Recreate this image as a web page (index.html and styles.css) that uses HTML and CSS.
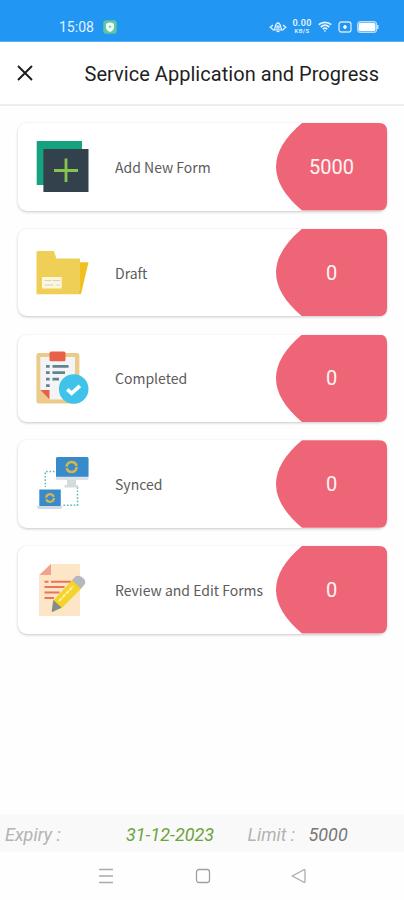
FILE: index.html
```
<!DOCTYPE html>
<html lang="en">
<head>
<meta charset="utf-8">
<title>Service Application and Progress</title>
<link rel="stylesheet" href="styles.css">
</head>
<body>
<header class="status">
  <span class="clock">15:08</span>
  <svg class="shield" width="14" height="14" viewBox="0 0 14 14"><rect x=".3" y=".3" width="13.4" height="13.4" rx="3" fill="#5cc8a0"/><path d="M7 2.3l4 1.4v3.5c0 2.3-1.8 3.8-4 4.7-2.200-.9-4-2.400-4-4.700V3.700z" fill="#f4fffa"/><circle cx="7" cy="6.800" r="1.400" fill="#83d5b5"/></svg>
  <svg class="eye" width="18" height="14" viewBox="0 0 18 14" fill="none" stroke="#e2f2ff" stroke-width="1.300"><path d="M4 5L1.200 7.300 4 9.500M14 5l2.800 2.300L14 9.500M5 9.800c1.500-1 1-6.800 4-6.800s2.500 5.800 4 6.800z"/><circle cx="9" cy="7" r="1.200"/><path d="M7.500 11.500h3"/></svg>
  <span class="speed"><b>0.00</b><b class="unit">KB/S</b></span>
  <svg class="wifi" width="14" height="12" viewBox="0 0 14 12" fill="none" stroke="#e8f5ff" stroke-width="1.700"><path d="M.7 3.700c3.700-3.200 8.900-3.200 12.600 0M2.800 6c2.500-2.200 5.900-2.200 8.400 0M4.800 8.200c1.300-1.200 3.100-1.200 4.400 0"/><path d="M5.700 9.400h2.600L7 11z" fill="#fff" stroke="none"/></svg>
  <svg class="sim" width="14" height="12" viewBox="0 0 14 12"><rect x="1" y="1" width="12" height="10" rx="2.200" fill="none" stroke="#cfe8fd" stroke-width="1.300"/><path d="M7 4v4M5 6h4" stroke="#fff" stroke-width="1.700"/></svg>
  <svg class="battery" width="22" height="12" viewBox="0 0 22 12"><rect x=".6" y=".6" width="19" height="10.800" rx="3" fill="none" stroke="#b9defc" stroke-width="1.100"/><rect x="1.500" y="1.700" width="17" height="8.600" rx="2" fill="#fff"/><path d="M20.800 4v4" stroke="#d9edfd" stroke-width="1.300"/></svg>
</header>
<div class="appbar">
  <svg class="close" width="16" height="16" viewBox="0 0 16 16"><path d="M1 1l14 14M15 1L1 15" stroke="#1c1c1c" stroke-width="1.900"/></svg>
  <h1>Service Application and Progress</h1>
</div>
<main class="cards">
  <section class="card">
    <svg class="icon" viewBox="0 0 54 54"><path fill="#16a17f" d="M.7 1H46v44H.7z"/><path fill="#33414d" d="M7.400 9h45.100v43H7.400z"/><path d="M30 18.500V42M18 30.500h24" stroke="#87c34f" stroke-width="2.800"/></svg>
    <span class="label add">Add New Form</span><span class="count">5000</span>
  </section>
  <section class="card">
    <svg class="icon" viewBox="0 0 54 54"><path fill="#efc11f" d="M40 16.300h12.500L45 48H35z"/><path fill="#efcf56" d="M.5 6q0-1 1-1H17q1 0 1.300 1l2 6.500H43q1 0 1 1V44l-1.500 4.300H.5z"/><path fill="#fbf6df" d="M6 31h19.700v11.500H6z"/><path d="M8.500 34.500h7m1.500 0h7M8.500 39h9m3 0h3" stroke="#d9d3b4" stroke-width="1.200"/></svg>
    <span class="label draft">Draft</span><span class="count">0</span>
  </section>
  <section class="card">
    <svg class="icon" viewBox="0 0 54 54"><rect x=".4" y="2" width="43" height="50.600" rx="2.500" fill="#ebca8a"/><path fill="#f3f4f5" d="M4.300 6H39v42.500H13.500L4.300 39z"/><path fill="#e96048" d="M4.300 39h9.200v9.500z"/><rect x="13.500" y=".5" width="16" height="9.800" rx="1.500" fill="#e76149"/><path d="M10 15.300h3.700M10 21.700h3.700M10 28.200h3.700M10 34.600h3.700M16.500 15.300h16M16.500 21.700H29M16.500 28.200H23" stroke="#628491" stroke-width="2.700"/><circle cx="37.700" cy="38" r="14.800" fill="#3fc3eb"/><path d="M31.300 38.400l4.300 3.900 8.300-7.500" fill="none" stroke="#fff" stroke-width="3.700"/></svg>
    <span class="label completed">Completed</span><span class="count">0</span>
  </section>
  <section class="card">
    <svg class="icon" viewBox="0 0 54 54"><path d="M18.500 14.500H9.300v15.500M41.500 30v18.300H27" fill="none" stroke="#5ebbb8" stroke-width="1.500" stroke-dasharray="1.700 1.700"/><rect x="20" y="0" width="32.500" height="23" rx="1.500" fill="#dce1e5"/><path fill="#378bcb" d="M21.500 0H51q1.500 0 1.500 1.500v18.300H20V1.500Q20 0 21.500 0z"/><path fill="#d5dadd" d="M31 23h9v5h2v2.500H28.500V28H31z"/><circle cx="35.600" cy="10" r="5" fill="none" stroke="#d7b44c" stroke-width="2.700" stroke-dasharray="14 1.700"/><path d="M3.300 32.500h21.500v17H3.300z" fill="#378bcb"/><path d="M.5 49h26.300l-1.500 3h-23z" fill="#d4dadf"/><circle cx="14" cy="41" r="3.900" fill="none" stroke="#d7b44c" stroke-width="2.400" stroke-dasharray="10.500 1.700"/></svg>
    <span class="label synced">Synced</span><span class="count">0</span>
  </section>
  <section class="card">
    <svg class="icon" viewBox="0 0 54 54"><path fill="#fde5c8" d="M14.500 1H44v52H3V12z"/><path fill="#f3a18f" d="M15 1v11H3.500z"/><path d="M8.500 18.700h4m2.500 0h20M8.500 24h20M8.500 29.500h15M8.500 35h9.500" stroke="#ec7456" stroke-width="2"/><path d="M36.500 16.800l9 8.400-20 20-9.800 3.500 1.500-11z" fill="#f5d329"/><path d="M36 17.300l9 8.500 3.500-4.300c3.600-4-4.600-11-9.200-8z" fill="#b3b8bd"/><path d="M17.300 37l8.200 7.500-8.500 4.300q-1.200.5-1.200-1z" fill="#858b91"/><path d="M23 38l14.500-15" stroke="#fff2a7" stroke-width="2" stroke-dasharray="4 1"/></svg>
    <span class="label review">Review and Edit Forms</span><span class="count">0</span>
  </section>
</main>
<footer class="info">
  <span class="key expiry">Expiry :</span><span class="date">31-12-2023</span><span class="key limit">Limit :</span><span class="value">5000</span>
</footer>
<nav class="nav">
  <svg width="16" height="16" viewBox="0 0 16 16"><path d="M1 1.500h14M1 8h14M1 14.500h14" stroke="#aaa" stroke-width="1.400"/></svg>
  <svg width="16" height="16" viewBox="0 0 16 16"><rect x="1.500" y="1.500" width="13" height="13" rx="2.500" fill="none" stroke="#a0a0a0" stroke-width="1.300"/></svg>
  <svg width="16" height="16" viewBox="0 0 16 16"><path d="M1.300 8L12.800 1.700q1.200-.4 1.200.8v11q0 1.200-1.200.8z" fill="none" stroke="#a6a6a6" stroke-width="1.200"/></svg>
</nav>
</body>
</html>
```
FILE: styles.css
```
* { box-sizing: border-box; }
body {
  margin: 0;
  width: 404px;
  height: 900px;
  display: flex;
  flex-direction: column;
  overflow: hidden;
  background: #fefefe;
  font-family: Roboto, "Liberation Sans", sans-serif;
  white-space: nowrap;
}
svg { display: block; flex: none; }
.status {
  flex: none;
  height: 42px;
  padding: 12px 24px 0 59px;
  display: flex;
  align-items: center;
  background: #2196f3;
  border-bottom: 1px solid #55aff5;
  color: #e4f3ff;
}
.clock { width: 44px; font-size: 14px; }
.eye { margin-left: 152px; }
.speed {
  width: 20px;
  margin: 0 6px 0 5px;
  display: flex;
  flex-direction: column;
  align-items: center;
  font-size: 9px;
  line-height: 8px;
  letter-spacing: .3px;
}
.speed b { font-weight: 600; }
.speed .unit { font-size: 6px; line-height: 8px; }
.sim { margin-left: 6px; }
.battery { margin-left: 5px; }
.appbar {
  flex: none;
  height: 64px;
  padding-left: 17px;
  display: flex;
  align-items: center;
  background: #fff;
  border-bottom: 2px solid #ededed;
}
.close { margin-bottom: 1px; }
h1 {
  margin: 1px 0 0 51.500px;
  color: #1f1f1f;
  font-size: 20px;
  font-weight: 400;
  line-height: 24px;
  letter-spacing: .04px;
}
.cards {
  flex: 1;
  padding: 17px 17px 0 18px;
  display: flex;
  flex-direction: column;
  gap: 18.250px;
}
.card {
  flex: none;
  height: 87.500px;
  padding-left: 18px;
  display: flex;
  align-items: center;
  border-radius: 9px;
  background: #fff;
  box-shadow: 0 1px 3px rgba(0, 0, 0, .22);
}
.icon { width: 54px; height: 54px; }
.label {
  flex: 1;
  margin-left: 25px;
  color: #5c5c5c;
  font-family: "Noto Sans CJK SC", "Noto Sans", sans-serif;
  font-size: 14px;
  font-weight: 400;
  line-height: 20px;
}
.count {
  flex: none;
  width: 111px;
  height: 100%;
  display: flex;
  align-items: center;
  justify-content: center;
  background: #ef6578;
  clip-path: path("M26 0 H103 Q111 0 111 8 V79.500 Q111 87.500 103 87.500 H26 Q-26 43.750 26 0 Z");
  color: #fff5f5;
  font-size: 20px;
}
.info {
  flex: none;
  height: 38px;
  padding: 3px 0 0 5px;
  display: flex;
  align-items: center;
  background: #f9f9f9;
  font-size: 18px;
  font-style: italic;
}
.key { color: #b3b3b3; }
.expiry { width: 121px; }
.date { width: 121.500px; color: #6da33b; }
.limit { width: 61px; }
.value { color: #777; }
.nav {
  flex: none;
  height: 48px;
  padding: 0 97px 1px 98px;
  display: flex;
  align-items: center;
  justify-content: space-between;
}
```
